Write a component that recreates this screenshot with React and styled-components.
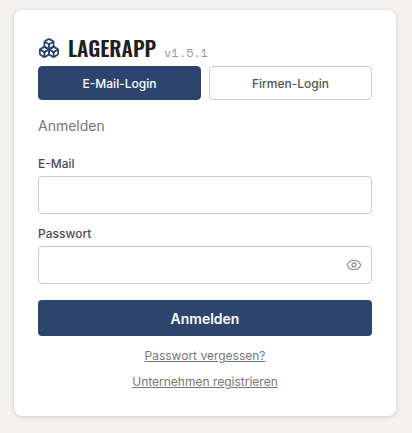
import React, { useState } from "react";
import styled, { createGlobalStyle } from "styled-components";
import { Boxes, Eye, EyeOff } from "lucide-react";

const GlobalStyle = createGlobalStyle`
  *, *::before, *::after {
    box-sizing: border-box;
  }
  body {
    margin: 0;
    background: #f3f2ee;
    color: #1f1f1f;
    font-family: "Inter", "Liberation Sans", sans-serif;
  }
  button, input {
    font-family: inherit;
  }
`;

const Page = styled.main`
  padding: 10px 16px 16px 14px;
`;

const Card = styled.section`
  padding: 24px;
  background: #fff;
  border-radius: 8px;
  box-shadow: 0 1px 4px rgba(0, 0, 0, 0.16);
`;

const Brand = styled.header`
  display: flex;
  align-items: center;
  gap: 8px;
  height: 28px;
  margin-bottom: 4px;
`;

const BrandIcon = styled(Boxes)`
  flex: none;
  color: #2d446f;
`;

const Wordmark = styled.div`
  display: flex;
  align-items: baseline;
  gap: 8px;
`;

const Title = styled.h1`
  margin: 0;
  font-family: "Oswald", "Roboto Condensed", "Liberation Sans Narrow", sans-serif;
  font-size: 21px;
  font-weight: 600;
  line-height: 28px;
`;

const Version = styled.span`
  color: #999;
  font-family: "Space Mono", "Liberation Mono", monospace;
  font-size: 12px;
  line-height: 16px;
`;

const Tabs = styled.div`
  display: flex;
  gap: 8px;
`;

const Tab = styled.button`
  flex: 1;
  height: 34px;
  padding: 0;
  border: 1px solid ${props => (props.$active ? "#2d446f" : "#ccc")};
  border-radius: 4px;
  background: ${props => (props.$active ? "#2d446f" : "#fff")};
  color: ${props => (props.$active ? "#fff" : "#555")};
  font-size: 12px;
  font-weight: 500;
  cursor: pointer;
`;

const Subtitle = styled.p`
  margin: 16px 0;
  color: #777;
  font-size: 14px;
  line-height: 20px;
`;

const Form = styled.form`
  display: flex;
  flex-direction: column;
`;

const Field = styled.div`
  display: flex;
  flex-direction: column;
  padding-top: 4px;
  margin-bottom: 8px;
`;

const Label = styled.label`
  margin-bottom: 4px;
  color: #4a4a4a;
  font-size: 12px;
  font-weight: 500;
  line-height: 16px;
`;

const InputWrap = styled.div`
  position: relative;
`;

const Input = styled.input`
  display: block;
  width: 100%;
  height: 38px;
  padding: 0 ${props => (props.$withToggle ? "40px" : "12px")} 0 12px;
  border: 1px solid #ccc;
  border-radius: 4px;
  background: #fff;
  font-size: 14px;
`;

const Toggle = styled.button`
  position: absolute;
  top: 0;
  right: 0;
  display: flex;
  align-items: center;
  height: 100%;
  padding: 0 10px;
  border: 0;
  background: none;
  color: #999;
  cursor: pointer;
`;

const Submit = styled.button`
  height: 36px;
  margin-top: 8px;
  border: 0;
  border-radius: 4px;
  background: #2d446f;
  color: #fff;
  font-size: 14px;
  font-weight: 600;
  cursor: pointer;
`;

const Links = styled.nav`
  display: flex;
  flex-direction: column;
  align-items: center;
  gap: 8px;
  margin: 11px 0 1px;
`;

const TextLink = styled.a`
  color: #777;
  font-size: 12px;
  line-height: 18px;
  text-decoration: underline;
`;

function App() {
  const [mode, setMode] = useState("email");
  const [visible, setVisible] = useState(false);

  return (
    <Page>
      <GlobalStyle />
      <Card>
        <Brand>
          <BrandIcon size={22} />
          <Wordmark>
            <Title>LAGERAPP</Title>
            <Version>v1.5.1</Version>
          </Wordmark>
        </Brand>
        <Tabs>
          <Tab type="button" $active={mode === "email"} onClick={() => setMode("email")}>
            E-Mail-Login
          </Tab>
          <Tab type="button" $active={mode === "company"} onClick={() => setMode("company")}>
            Firmen-Login
          </Tab>
        </Tabs>
        <Subtitle>Anmelden</Subtitle>
        <Form onSubmit={e => e.preventDefault()}>
          <Field>
            <Label htmlFor="email">E-Mail</Label>
            <Input id="email" type="email" autoComplete="email" />
          </Field>
          <Field>
            <Label htmlFor="password">Passwort</Label>
            <InputWrap>
              <Input
                id="password"
                type={visible ? "text" : "password"}
                autoComplete="current-password"
                $withToggle
              />
              <Toggle
                type="button"
                aria-label={visible ? "Passwort verbergen" : "Passwort anzeigen"}
                onClick={() => setVisible(!visible)}
              >
                {visible ? <EyeOff size={16} /> : <Eye size={16} />}
              </Toggle>
            </InputWrap>
          </Field>
          <Submit type="submit">Anmelden</Submit>
        </Form>
        <Links>
          <TextLink href="#passwort">Passwort vergessen?</TextLink>
          <TextLink href="#registrieren">Unternehmen registrieren</TextLink>
        </Links>
      </Card>
    </Page>
  );
}

export default App;
